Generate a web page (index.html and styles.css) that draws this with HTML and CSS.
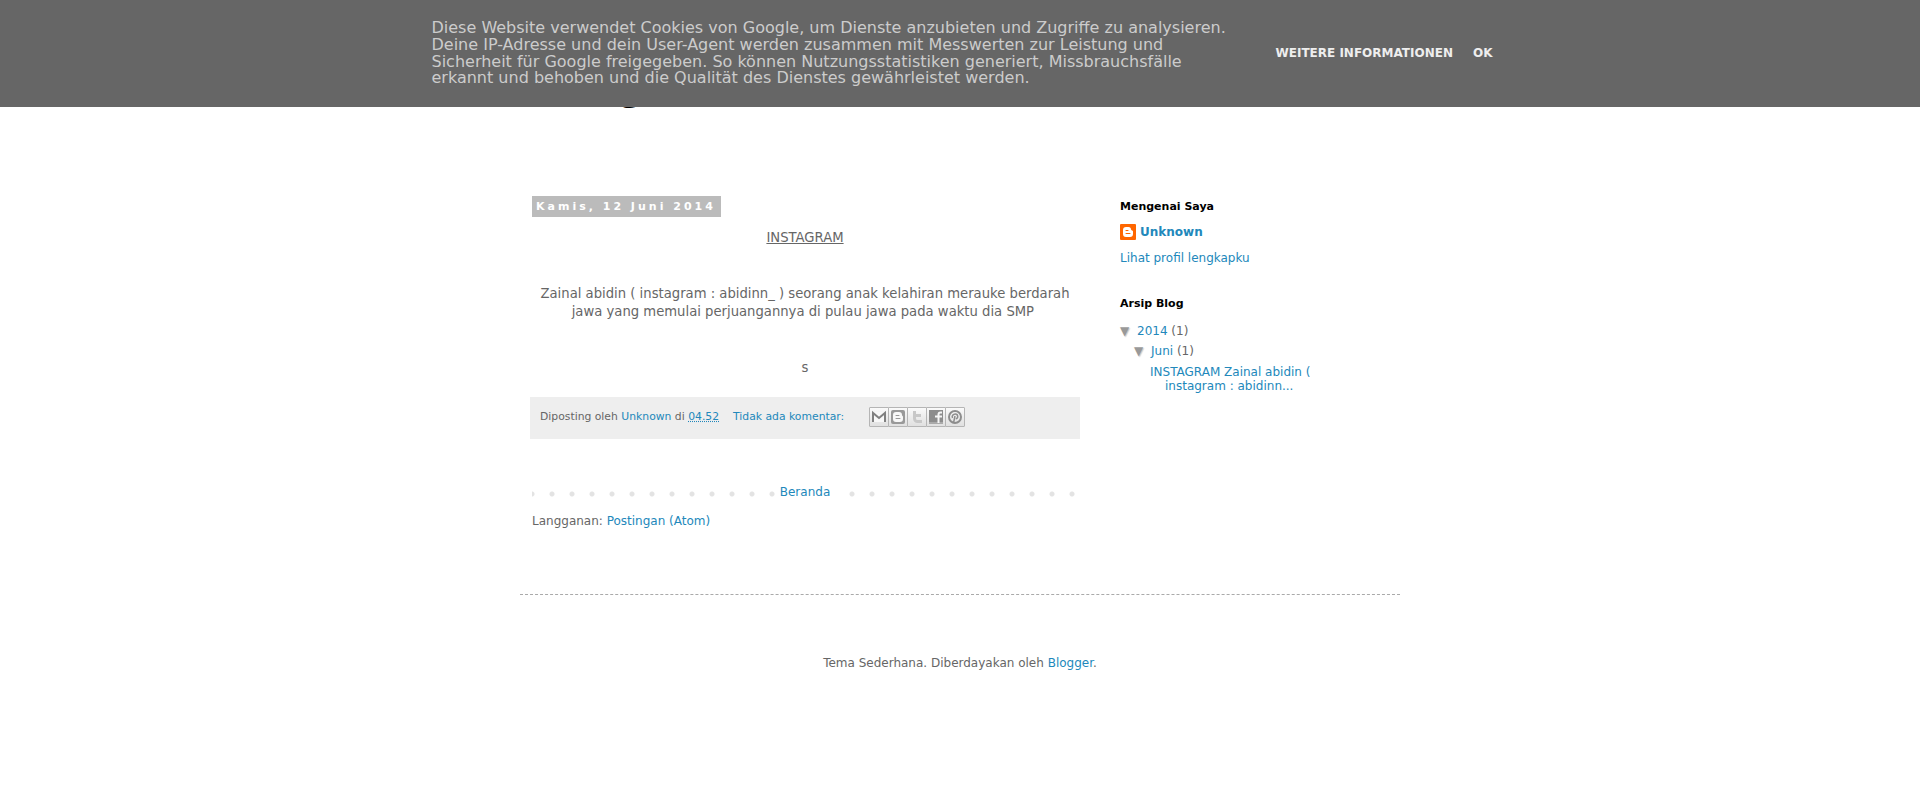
FILE: index.html
```
<!DOCTYPE html>
<html lang="id">
<head>
	<meta charset="UTF-8">
	<title>blog</title>
	<link rel="stylesheet" href="styles.css">
</head>
<body>
	<div class="cookie-bar" lang="de">
		<div class="cookie-inner">
			<p class="cookie-text">Diese Website verwendet Cookies von Google, um Dienste anzubieten und Zugriffe zu analysieren. Deine IP-Adresse und dein User-Agent werden zusammen mit Messwerten zur Leistung und Sicherheit für Google freigegeben. So können Nutzungsstatistiken generiert, Missbrauchsfälle erkannt und behoben und die Qualität des Dienstes gewährleistet werden.</p>
			<div class="cookie-buttons">
				<a href="#">Weitere Informationen</a>
				<a href="#">Ok</a>
			</div>
		</div>
	</div>

	<div class="content">
		<header class="header">
			<h1 class="title">blog</h1>
		</header>

		<div class="columns">
			<main class="main">
				<h2 class="date-header"><span>Kamis, 12 Juni 2014</span></h2>
				<article class="post">
					<div class="post-body">
						<u>INSTAGRAM</u><br>
						<br>
						<br>
						Zainal abidin ( instagram : abidinn_ ) seorang anak kelahiran merauke berdarah jawa yang memulai perjuangannya di pulau jawa pada waktu dia SMP&nbsp;<br>
						<br>
						<br>
						s
					</div>
					<div class="post-footer">
						<span>Diposting oleh <a href="#">Unknown</a> di <a class="timestamp" href="#">04.52</a></span>
						<a class="comment-link" href="#">Tidak ada komentar:</a>
						<div class="share">
							<a href="#" aria-label="Email">
								<svg viewBox="0 0 18 18"><path d="M2 4h14v10H2z" fill="#f8f8f8"/><path d="M3 14V5l6 5 6-5v9" fill="none" stroke="#808080" stroke-width="2"/></svg>
							</a>
							<a href="#" aria-label="Blog">
								<svg viewBox="0 0 18 18"><rect x="2" y="2" width="14" height="14" rx="2" fill="#999"/><path d="M7 4h3a3 3 0 0 1 3 3c0 1 1 .7 1 2v2a3 3 0 0 1-3 3H7a3 3 0 0 1-3-3V7a3 3 0 0 1 3-3z" fill="#f8f8f8"/><path d="M7 7.500h3M7 10.500h4" stroke="#999" stroke-linecap="round"/></svg>
							</a>
							<a href="#" aria-label="Twitter">
								<svg viewBox="0 0 18 18"><path d="M6.500 3v7.500a3 3 0 0 0 3 3H14M6.500 7.500H13" fill="none" stroke="#c8c8c8" stroke-width="3" stroke-linejoin="round"/></svg>
							</a>
							<a href="#" aria-label="Facebook">
								<svg viewBox="0 0 18 18"><path d="M2 2h14v14H2z" fill="#8d8d8d"/><path d="M2 14h14v2H2z" fill="#aaa"/><path d="M15 4.500h-1.500c-1.500 0-2 .7-2 2V15M8 8.500h7" fill="none" stroke="#f6f6f6" stroke-width="2"/></svg>
							</a>
							<a href="#" aria-label="Pinterest">
								<svg viewBox="0 0 18 18"><circle cx="9" cy="9" r="6" fill="none" stroke="#8d8d8d" stroke-width="2"/><path d="M7.500 15l1.500-7M6.500 10C5.500 8 7 6 9.300 6c3.300 0 3 4.800.5 4.800" fill="none" stroke="#8d8d8d" stroke-width="1.500"/></svg>
							</a>
						</div>
					</div>
				</article>
				<nav class="pager"><a href="#">Beranda</a></nav>
				<div class="feed">Langganan: <a href="#">Postingan (Atom)</a></div>
			</main>

			<aside class="sidebar">
				<section class="widget">
					<h2>Mengenai Saya</h2>
					<a class="profile-name" href="#">
						<svg viewBox="0 0 16 16"><rect width="16" height="16" rx="1" fill="#f60"/><path d="M6 3h2.500A2.500 2.500 0 0 1 11 5.500c0 1.200 2 .5 2 2V10a3 3 0 0 1-3 3H6a3 3 0 0 1-3-3V6a3 3 0 0 1 3-3z" fill="#fff"/><path d="M6 6.500h2M6 9.500h4" stroke="#f60" stroke-linecap="round"/></svg>
						Unknown
					</a>
					<a class="profile-link" href="#">Lihat profil lengkapku</a>
				</section>
				<section class="widget">
					<h2>Arsip Blog</h2>
					<ul class="archive">
						<li>
							<span class="toggle">▼</span><a href="#">2014</a> (1)
							<ul>
								<li>
									<span class="toggle">▼</span><a href="#">Juni</a> (1)
									<ul class="posts">
										<li><a href="#">INSTAGRAM Zainal abidin ( instagram : abidinn...</a></li>
									</ul>
								</li>
							</ul>
						</li>
					</ul>
				</section>
			</aside>
		</div>

		<footer class="footer">Tema Sederhana. Diberdayakan oleh <a href="#">Blogger</a>.</footer>
	</div>
</body>
</html>
```
FILE: styles.css
```
body{
	margin:0;
	font:12px/15px "DejaVu Sans", sans-serif;
	color:#666;
	background:#fff;
}
h1,h2,p,ul,li{
	margin:0;
	padding:0;
	list-style:none;
}
a{
	color:#2288bb;
	text-decoration:none;
}
a:hover{
	color:#33aaff;
}
.cookie-bar{
	position:fixed;
	top:0;
	left:0;
	right:0;
	z-index:10;
	background:#666;
}
.cookie-inner{
	display:flex;
	justify-content:center;
	align-items:center;
	gap:44px;
	padding:20px 16px 20px 20px;
}
.cookie-text{
	max-width:800px;
	color:#ccc;
	font-size:16px;
	line-height:1.05;
}
.cookie-buttons{
	display:flex;
	gap:20px;
}
.cookie-buttons a{
	color:#eee;
	font-weight:bold;
	text-transform:uppercase;
	white-space:nowrap;
}

.content{
	max-width:880px;
	margin:0 auto;
}
.header{
	padding:53px 22px 87px;
}
.title{
	color:#000;
	font-size:48px;
	line-height:56px;
	font-weight:normal;
}
.columns{
	display:grid;
	grid-template-columns:minmax(0,1fr) 250px;
	gap:42px;
	padding:0 30px 65px 12px;
	border-bottom:1px dashed #aaa;
}
.date-header{
	font-size:11px;
	line-height:1.4;
}
.date-header span{
	display:inline-block;
	padding:3px 5px 3px 4px;
	color:#fff;
	background:#bbb;
	letter-spacing:3px;
}
.post-body{
	padding:12px 0 20px;
	font-size:110%;
	line-height:1.4;
	text-align:center;
}
.post-footer{
	display:flex;
	margin:0 -2px;
	padding:10px 10px 12px;
	font-size:90%;
	line-height:20px;
	background:#eee;
}
.timestamp{
	text-decoration:underline dotted;
}
.comment-link{
	margin-left:14px;
}
.share{
	display:flex;
	margin-left:25px;
}
.share a{
	width:18px;
	height:18px;
	border:1px solid #b5b5b5;
	border-radius:1px;
	background:linear-gradient(#fafafa,#e0e0e0);
}
.share a + a{
	margin-left:-1px;
}
.share svg{
	display:block;
}
.pager{
	margin-top:46px;
	text-align:center;
	background:radial-gradient(circle at 10px 9px,#e3e3e3 2px,transparent 3px) -10px 0 / 20px 20px repeat-x;
}
.pager a{
	display:inline-block;
	padding:0 5px;
	background:#fff;
}
.feed{
	margin-top:14px;
}

.sidebar{
	padding-top:3px;
}
.widget{
	margin-bottom:30px;
}
.widget h2{
	margin-bottom:10px;
	color:#000;
	font-size:11px;
	line-height:15px;
}
.profile-name{
	display:flex;
	align-items:center;
	gap:4px;
	font-weight:bold;
}
.profile-name svg{
	width:16px;
	height:16px;
}
.profile-link{
	display:block;
	margin-top:11px;
}
.archive{
	padding-top:3px;
}
.archive ul{
	margin-top:5px;
	padding-left:14px;
}
.toggle{
	display:inline-block;
	width:17px;
	color:#999;
	text-shadow:1px 1px 1px #ccc;
}
.archive .posts{
	margin-top:6px;
	padding-left:31px;
	line-height:14px;
	text-indent:-15px;
}
.footer{
	padding:61px 30px;
	text-align:center;
}
```
